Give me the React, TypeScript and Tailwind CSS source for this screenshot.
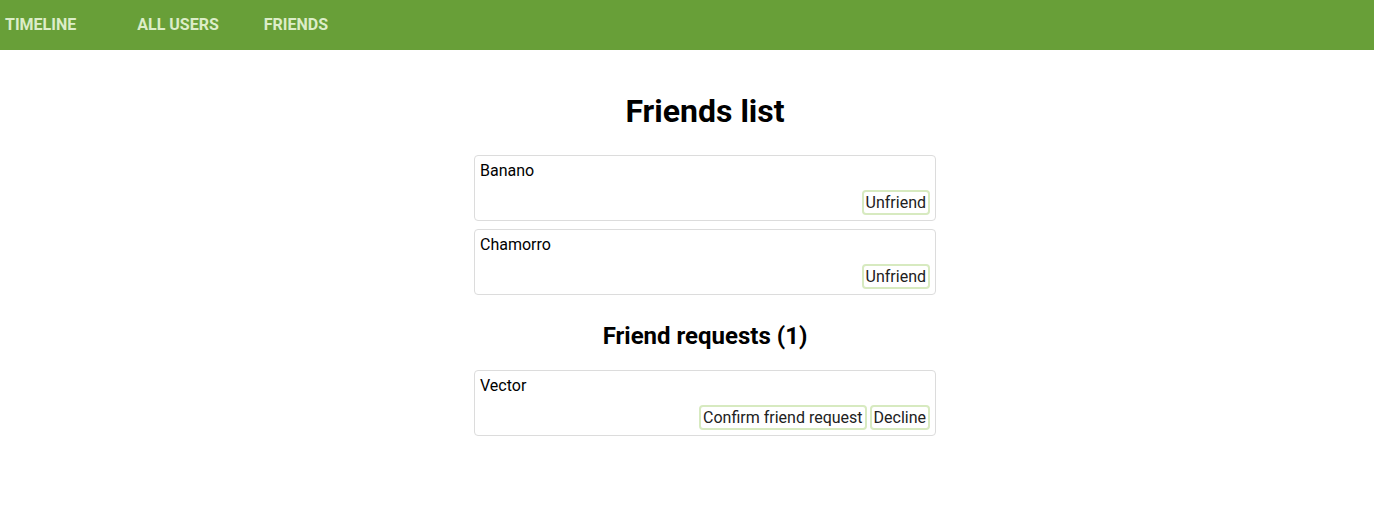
import React from 'react'

interface Person {
  name: string
}

const friends: Person[] = [{ name: 'Banano' }, { name: 'Chamorro' }]
const requests: Person[] = [{ name: 'Vector' }]

function ActionButton({ label }: { label: string }) {
  return (
    <button className="h-[25px] px-[2px] border-2 border-[#d7eac0] rounded-[4px] bg-white text-[16px] leading-[19px] text-[#212121]">
      {label}
    </button>
  )
}

function UserCard({ name, actions }: { name: string; actions: string[] }) {
  return (
    <div className="border border-[#dcdcdc] rounded-[4px] px-[5px] pt-[5px] pb-[5px]">
      <div className="text-[16px] leading-[19px] text-black">{name}</div>
      <div className="mt-[10px] flex justify-end gap-[3px]">
        {actions.map((a) => (
          <ActionButton key={a} label={a} />
        ))}
      </div>
    </div>
  )
}

export default function App() {
  return (
    <div className="min-h-[522px] bg-white" style={{ fontFamily: 'Roboto, "Liberation Sans", sans-serif' }}>
      <nav className="h-[50px] bg-[#689f38] flex items-center text-[16px] font-bold text-[#dcedc8]">
        <a className="ml-[5px]">TIMELINE</a>
        <a className="ml-[61px]">ALL USERS</a>
        <a className="ml-[45px]">FRIENDS</a>
      </nav>

      <div className="pl-[36px] flex justify-center">
        <div className="w-[462px]">
          <h1 className="mt-[42px] text-center text-[32px] leading-[38px] font-bold text-black">
            Friends list
          </h1>
          <div className="mt-[25px] flex flex-col gap-[8px]">
            {friends.map((f) => (
              <UserCard key={f.name} name={f.name} actions={['Unfriend']} />
            ))}
          </div>

          <h2 className="mt-[27px] text-center text-[24px] leading-[28px] font-bold text-black">
            Friend requests (1)
          </h2>
          <div className="mt-[20px] flex flex-col gap-[8px]">
            {requests.map((r) => (
              <UserCard key={r.name} name={r.name} actions={['Confirm friend request', 'Decline']} />
            ))}
          </div>
        </div>
      </div>
    </div>
  )
}
